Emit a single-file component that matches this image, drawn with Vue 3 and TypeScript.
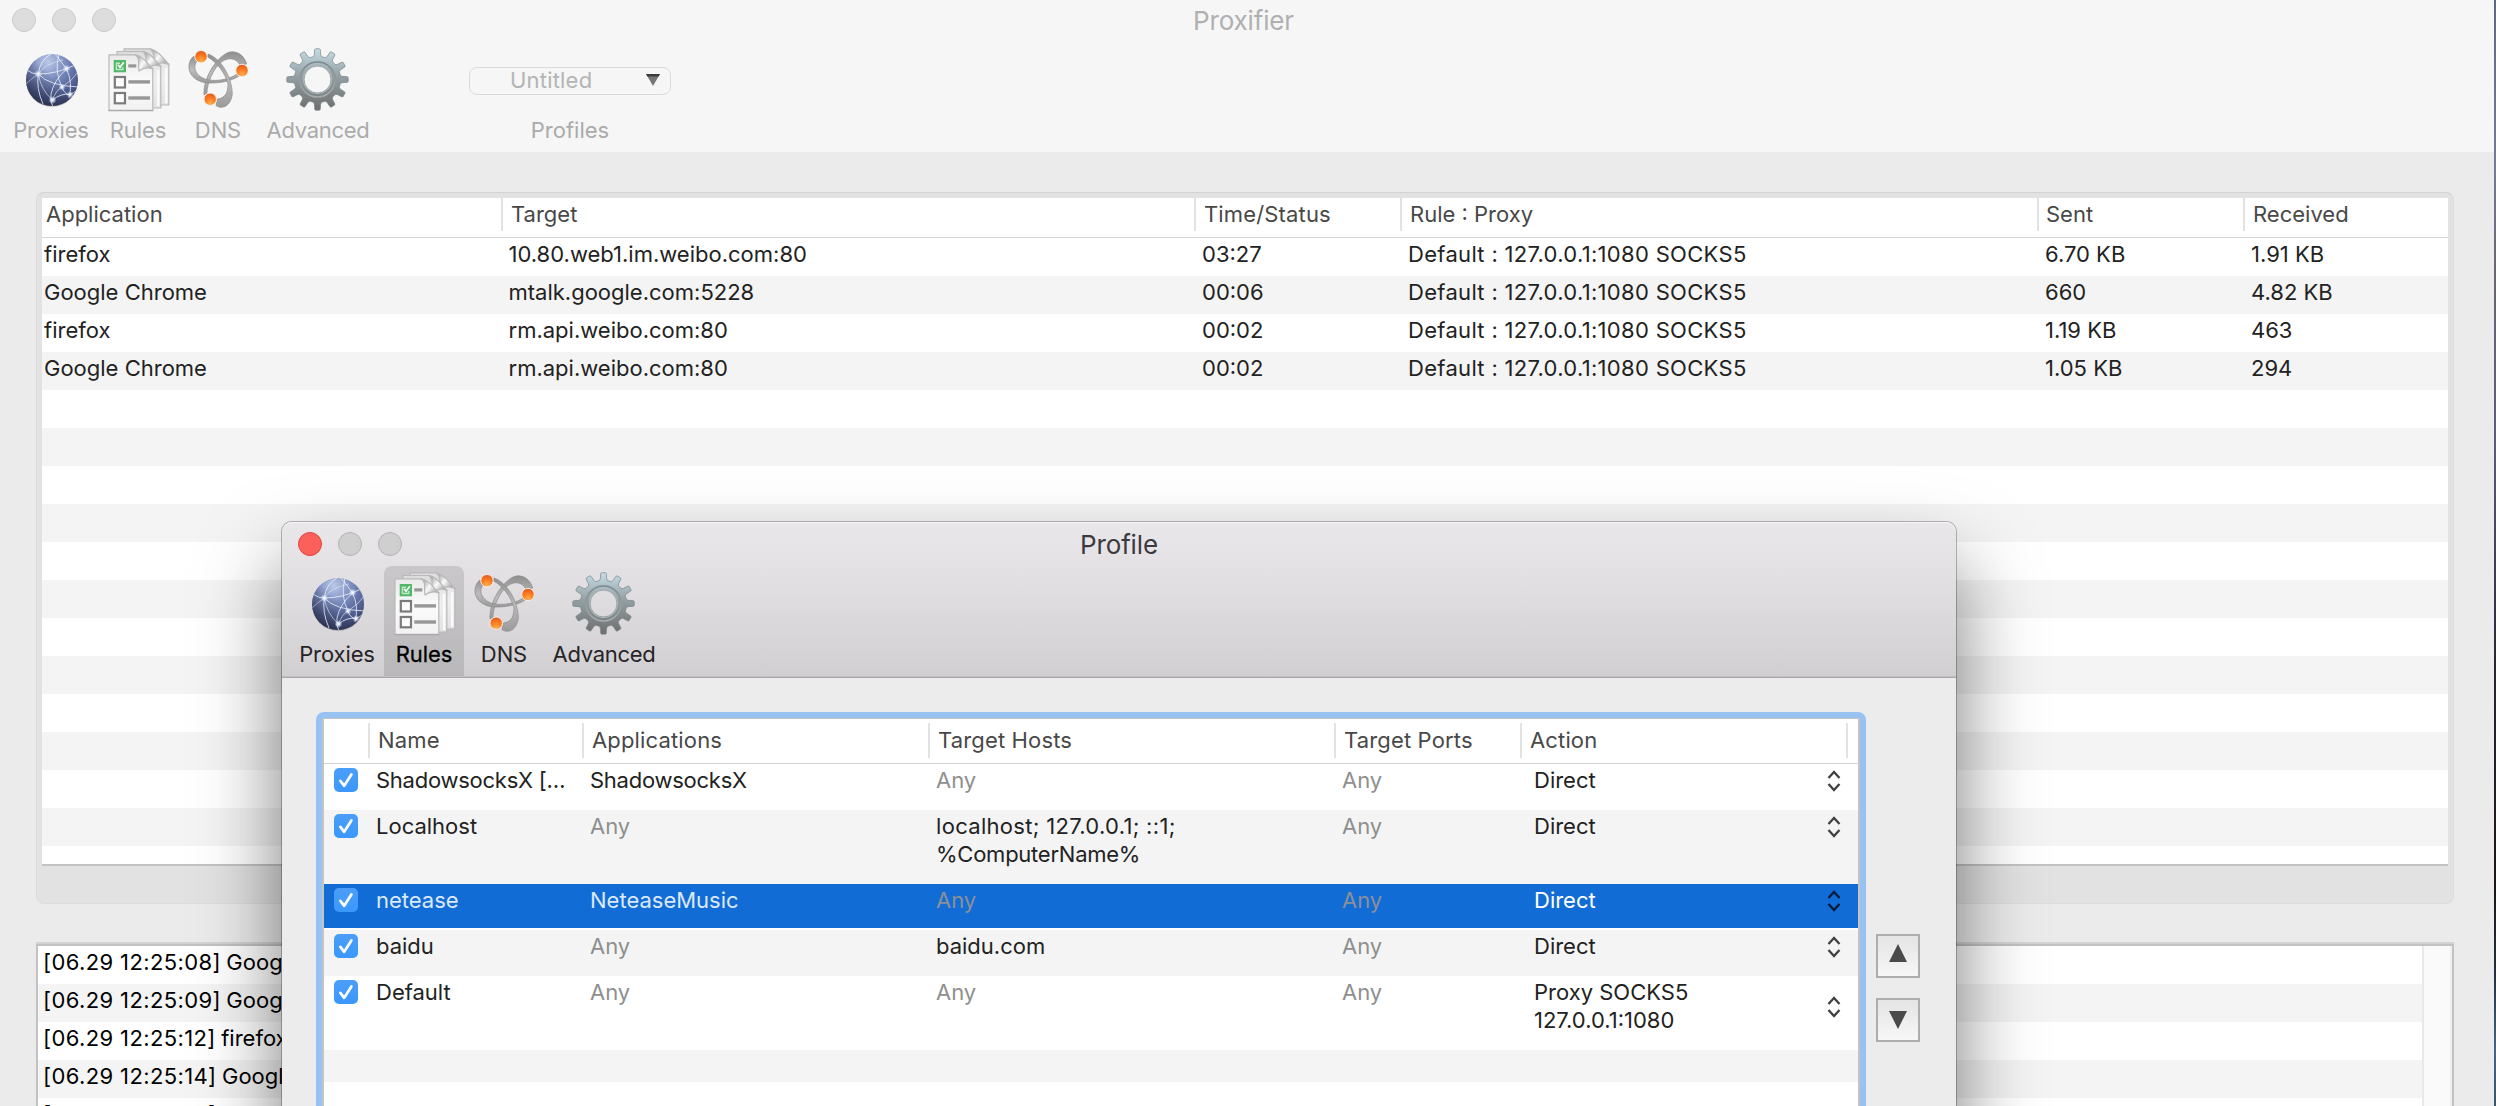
<script setup lang="ts">
interface Tool { label: string; icon: string; width: number; on?: boolean }
interface Connection { app: string; target: string; time: string; rule: string; sent: string; received: string }
interface LogLine { stamp: string; message: string }
interface Rule { name: string; apps: string; hosts: string[]; ports: string; action: string[]; height: number; selected?: boolean }

const tools: Tool[] = [
  { label: 'Proxies', icon: 'globe', width: 94 },
  { label: 'Rules', icon: 'rules', width: 80, on: true },
  { label: 'DNS', icon: 'dns', width: 80 },
  { label: 'Advanced', icon: 'gear', width: 120 },
]

const route = 'Default : 127.0.0.1:1080 SOCKS5'
const connections: Connection[] = [
  { app: 'firefox', target: '10.80.web1.im.weibo.com:80', time: '03:27', rule: route, sent: '6.70 KB', received: '1.91 KB' },
  { app: 'Google Chrome', target: 'mtalk.google.com:5228', time: '00:06', rule: route, sent: '660', received: '4.82 KB' },
  { app: 'firefox', target: 'rm.api.weibo.com:80', time: '00:02', rule: route, sent: '1.19 KB', received: '463' },
  { app: 'Google Chrome', target: 'rm.api.weibo.com:80', time: '00:02', rule: route, sent: '1.05 KB', received: '294' },
]

const log: LogLine[] = [
  { stamp: '[06.29 12:25:08]', message: 'Goog' },
  { stamp: '[06.29 12:25:09]', message: 'Goog' },
  { stamp: '[06.29 12:25:12]', message: 'firefox' },
  { stamp: '[06.29 12:25:14]', message: 'Googl' },
  { stamp: '[06.29 12:25:14]', message: 'Googl' },
]

const rules: Rule[] = [
  { name: 'ShadowsocksX […', apps: 'ShadowsocksX', hosts: ['Any'], ports: 'Any', action: ['Direct'], height: 46 },
  { name: 'Localhost', apps: 'Any', hosts: ['localhost; 127.0.0.1; ::1;', '%ComputerName%'], ports: 'Any', action: ['Direct'], height: 74 },
  { name: 'netease', apps: 'NeteaseMusic', hosts: ['Any'], ports: 'Any', action: ['Direct'], height: 46, selected: true },
  { name: 'baidu', apps: 'Any', hosts: ['baidu.com'], ports: 'Any', action: ['Direct'], height: 46 },
  { name: 'Default', apps: 'Any', hosts: ['Any'], ports: 'Any', action: ['Proxy SOCKS5', '127.0.0.1:1080'], height: 74 },
]

function tracking(text: string): string {
  if (text.includes('127.')) return 'loose'
  if (text.startsWith('Shadow') || text.startsWith('%')) return 'tight'
  return ''
}

// Outline of the twelve-toothed gear: each tooth tapers from root to tip.
function gearOutline(cx: number, cy: number): string {
  const pts: string[] = []
  const at = (r: number, deg: number) => {
    const a = ((deg - 90) * Math.PI) / 180
    pts.push(`${(cx + r * Math.cos(a)).toFixed(2)} ${(cy + r * Math.sin(a)).toFixed(2)}`)
  }
  for (let i = 0; i < 12; i++) {
    const m = i * 30
    at(23.2, m - 10)
    at(25, m - 7.2)
    at(30, m - 5.4)
    at(30.8, m - 3.8)
    at(30.8, m + 3.8)
    at(30, m + 5.4)
    at(25, m + 7.2)
    at(23.2, m + 10)
  }
  return `M${pts.join('L')}Z`
}
const gearPath = gearOutline(31.5, 31.5) + 'M45 31.5a13.5 13.5 0 1 0-27 0a13.5 13.5 0 1 0 27 0Z'
</script>

<template>
  <div class="desktop">
    <svg class="sprites" width="0" height="0" aria-hidden="true">
      <defs>
        <radialGradient id="g-globe" cx="0.42" cy="0.15" r="0.9">
          <stop offset="0" stop-color="#b9c8e8" />
          <stop offset="0.4" stop-color="#7889bb" />
          <stop offset="0.75" stop-color="#4d5b8c" />
          <stop offset="1" stop-color="#2f3654" />
        </radialGradient>
        <linearGradient id="g-shade" x1="0.1" y1="1" x2="0.7" y2="0.4">
          <stop offset="0" stop-color="#1a1c2c" stop-opacity="0.7" />
          <stop offset="0.8" stop-color="#2a3050" stop-opacity="0" />
        </linearGradient>
        <radialGradient id="g-node">
          <stop offset="0" stop-color="#fff" />
          <stop offset="0.35" stop-color="#e8f0ff" stop-opacity="0.85" />
          <stop offset="1" stop-color="#cfe0ff" stop-opacity="0" />
        </radialGradient>
        <linearGradient id="g-page" x1="0" y1="0" x2="0" y2="1">
          <stop offset="0" stop-color="#e9e9e9" />
          <stop offset="0.5" stop-color="#fbfbfb" />
          <stop offset="1" stop-color="#f2f2f2" />
        </linearGradient>
        <linearGradient id="g-back" x1="0" y1="0" x2="0" y2="1">
          <stop offset="0" stop-color="#dcdcdc" />
          <stop offset="0.5" stop-color="#efefef" />
          <stop offset="1" stop-color="#e2e2e2" />
        </linearGradient>
        <linearGradient id="g-curl" x1="0" y1="0.2" x2="1" y2="0.9">
          <stop offset="0" stop-color="#9d9d9d" />
          <stop offset="0.45" stop-color="#fafafa" />
          <stop offset="1" stop-color="#8e8e8e" />
        </linearGradient>
        <linearGradient id="g-metal" x1="0" y1="0" x2="0" y2="1">
          <stop offset="0" stop-color="#8f8f8f" />
          <stop offset="0.5" stop-color="#bcbcbc" />
          <stop offset="1" stop-color="#9a9a9a" />
        </linearGradient>
        <radialGradient id="g-ball" cx="0.5" cy="0.85" r="0.85">
          <stop offset="0" stop-color="#ffae4c" />
          <stop offset="0.5" stop-color="#fb7d22" />
          <stop offset="1" stop-color="#e4571a" />
        </radialGradient>
        <linearGradient id="g-gear" x1="0" y1="0" x2="0" y2="1">
          <stop offset="0" stop-color="#c5dde4" />
          <stop offset="0.45" stop-color="#939fa3" />
          <stop offset="1" stop-color="#6d6e6e" />
        </linearGradient>
        <linearGradient id="g-ring" x1="0" y1="0" x2="0" y2="1">
          <stop offset="0" stop-color="#7b898e" />
          <stop offset="1" stop-color="#a7abab" />
        </linearGradient>
        <clipPath id="c-globe"><circle cx="33" cy="32" r="26" /></clipPath>
      </defs>

      <symbol id="globe" viewBox="0 0 64 64">
        <ellipse cx="33" cy="33.5" rx="25.8" ry="25.5" fill="#000" opacity="0.2" />
        <circle cx="33" cy="32" r="26" fill="url(#g-globe)" />
        <circle cx="33" cy="32" r="26" fill="url(#g-shade)" />
        <g clip-path="url(#c-globe)" fill="none" stroke="#eef3ff" stroke-width="1" stroke-opacity="0.8">
          <path d="M8 22Q13 26 19.3 26Q38 26 56 17" />
          <path d="M32 6Q21 12 19.3 26Q17 40 24 56" />
          <path d="M19.3 26Q30 38 60 39" />
          <path d="M36 6Q41 12 47.5 21Q54 34 50 50" />
          <path d="M47.5 21Q35 32 32 46Q31 54 34 59" />
          <path d="M40 6Q35 24 43 39Q45 46 51 47" />
          <path d="M7 36Q12 31 19.3 26Q25 16 44 12" stroke-opacity="0.5" />
          <path d="M19.3 26Q22 42 33.5 52Q37 42 43 39Q54 32 59 24" stroke-opacity="0.6" />
          <path d="M33.5 52Q42 45 51 46.5Q55 45 58 42" />
        </g>
        <circle cx="19.3" cy="26" r="4" fill="url(#g-node)" />
        <circle cx="47.5" cy="20.5" r="4" fill="url(#g-node)" />
        <circle cx="33.5" cy="52" r="4" fill="url(#g-node)" />
        <circle cx="43" cy="39" r="3.5" fill="url(#g-node)" />
        <circle cx="51" cy="46.5" r="3.5" fill="url(#g-node)" />
      </symbol>

      <symbol id="rules" viewBox="0 0 64 64">
        <g stroke="#b9b9b9" stroke-width="1.2" stroke-linejoin="round">
          <path d="M18 .8H44C52 3 54 11 62.8 16V57H18Z" fill="url(#g-back)" />
          <path d="M44 .8C50 5 47 12 49 17Q56 13 62.8 16.5C57 10 53 3 44 .8Z" fill="url(#g-curl)" />
          <path d="M11 3.5H37C45 5 46 13 54.8 18V60H11Z" fill="url(#g-back)" />
          <path d="M37 3.5C42 8 39 14 41 20Q48 15 54.8 18.5C49 12 45 5 37 3.5Z" fill="url(#g-curl)" />
          <path d="M3 6.8H29C37 8 38 16 46.8 20.5V62.4H3Z" fill="url(#g-page)" />
          <path d="M29 6.8C35 11 31.5 16 33 23Q40 18 46.8 21C41 15 37 8 29 6.8Z" fill="url(#g-curl)" />
        </g>
        <path d="M52.2 22V58M60.2 20V55" fill="none" stroke="#fafafa" stroke-width="2.4" />
        <path d="M2.4 62.6H47.4" stroke="#a9a9a9" stroke-width="1.4" />
        <rect x="7.7" y="12" width="12.3" height="12.3" fill="#54b768" />
        <path d="M10.4 22V15.2H14M10.4 21.5H16.8V19" fill="none" stroke="#bfe8c8" stroke-width="1.4" />
        <path d="M12 16.8L14 19.3L17.8 14.3" fill="none" stroke="#f2fff4" stroke-width="1.8" />
        <g fill="#fdfdfd" stroke="#7b7b7b" stroke-width="2.2">
          <rect x="8.8" y="29" width="10.2" height="10.5" />
          <rect x="8.8" y="45" width="10.2" height="10.3" />
        </g>
        <g fill="#979797">
          <rect x="22.3" y="16.3" width="8" height="3.2" />
          <rect x="22.3" y="32.2" width="21.7" height="3.4" />
          <rect x="22.3" y="48.3" width="21.7" height="3.4" />
        </g>
      </symbol>

      <symbol id="dns" viewBox="0 0 64 64">
        <g fill="url(#g-metal)" stroke="#8b8b8b" stroke-width="0.7" stroke-linejoin="round">
          <path d="M60.7 16C58 6 49 2 42 4.6C30 10 17 30 18 47L21 45C21 36 27 20 36 13.5C43 9 50 10 54 17Z" />
          <path d="M8 8C0 14 0 31 19 34.7C32 36 46 33 53 28L52 25.5C44 31 32 34 20 31.5C8 27 7 18 11 13Z" />
          <path d="M30 57.5C36 62 45 58 46.3 46C46 30 36 11 22 6L21.5 9C30 13 40 26 42 36C42 45 39 50 31.5 51Z" />
        </g>
        <g stroke="#f4f4f4" stroke-width="0.9" fill="url(#g-ball)">
          <circle cx="15" cy="8.7" r="6.2" />
          <circle cx="56" cy="22.5" r="6.2" />
          <circle cx="24.2" cy="51.2" r="6.2" />
        </g>
      </symbol>

      <symbol id="gear" viewBox="0 0 64 64">
        <path :d="gearPath" fill="url(#g-gear)" fill-rule="evenodd" stroke="#78858a" stroke-width="0.7" stroke-linejoin="round" />
        <circle cx="31.5" cy="31.5" r="17.5" fill="none" stroke="url(#g-ring)" stroke-width="1.6" />
        <circle cx="31.5" cy="31.5" r="14" fill="none" stroke="#a9b4b7" stroke-width="1.3" />
      </symbol>

      <symbol id="check" viewBox="0 0 24 24">
        <path d="M6.4 12.9L10.2 17.8L17.4 6.5" fill="none" stroke="#fff" stroke-width="2.7" stroke-linecap="round" stroke-linejoin="round" />
      </symbol>

      <symbol id="stepper" viewBox="0 0 14 22">
        <path d="M1.5 8L7 2L12.5 8M1.5 14L7 20L12.5 14" fill="none" stroke="currentColor" stroke-width="2.3" />
      </symbol>
    </svg>

    <main class="window main">
      <header class="chrome">
        <div class="titlebar">
          <div class="lights"><i></i><i></i><i></i></div>
          <h1>Proxifier</h1>
        </div>
        <div class="toolbar">
          <div v-for="t in tools" :key="t.label" class="tool" :style="{ width: t.width + 'px' }">
            <svg class="icon"><use :href="'#' + t.icon" /></svg>
            <span>{{ t.label }}</span>
          </div>
          <div class="profiles">
            <div class="popup">
              <span>Untitled</span>
              <svg width="14" height="12" viewBox="0 0 14 12"><path d="M0 0H14L7 12Z" fill="#777" /><path d="M0 0H14L12.6 2.5H1.4Z" fill="#3c3c3c" /></svg>
            </div>
            <span>Profiles</span>
          </div>
        </div>
      </header>

      <section class="connections">
        <div class="conn-table">
          <div class="conn-grid head">
            <span>Application</span><span>Target</span><span>Time/Status</span><span>Rule : Proxy</span><span>Sent</span><span>Received</span>
          </div>
          <div class="conn-rows">
            <div v-for="(c, i) in connections" :key="i" class="conn-grid row">
              <span>{{ c.app }}</span><span>{{ c.target }}</span><span>{{ c.time }}</span><span class="loose">{{ c.rule }}</span><span>{{ c.sent }}</span><span>{{ c.received }}</span>
            </div>
          </div>
        </div>
      </section>

      <section class="log">
        <div class="log-lines">
          <p v-for="(l, i) in log" :key="i"><span class="stamp">{{ l.stamp }}</span><span>{{ l.message }}</span></p>
        </div>
        <div class="scroller"></div>
      </section>
    </main>

    <div class="wallpaper"></div>

    <div class="window dialog">
      <header class="chrome">
        <div class="titlebar">
          <div class="lights"><i class="close"></i><i></i><i></i></div>
          <h1>Profile</h1>
        </div>
        <div class="toolbar">
          <div v-for="t in tools" :key="t.label" class="tool" :class="{ on: t.on }" :style="{ width: t.width + 'px' }">
            <svg class="icon"><use :href="'#' + t.icon" /></svg>
            <span>{{ t.label }}</span>
          </div>
        </div>
      </header>

      <div class="dialog-body">
        <div class="focus">
          <div class="rule-table">
            <div class="rule-grid rule-head">
              <span></span><span>Name</span><span>Applications</span><span>Target Hosts</span><span>Target Ports</span><span>Action</span>
            </div>
            <div
              v-for="r in rules"
              :key="r.name"
              class="rule-grid rule-row"
              :class="{ selected: r.selected }"
              :style="{ height: r.height + 'px' }"
            >
              <span class="box"><svg width="24" height="24"><use href="#check" /></svg></span>
              <span :class="tracking(r.name)">{{ r.name }}</span>
              <span :class="[{ any: r.apps === 'Any' }, tracking(r.apps)]">{{ r.apps }}</span>
              <span :class="{ any: r.hosts[0] === 'Any' }"><b v-for="h in r.hosts" :key="h" :class="tracking(h)">{{ h }}</b></span>
              <span :class="{ any: r.ports === 'Any' }">{{ r.ports }}</span>
              <span class="action" :class="{ double: r.action.length > 1 }">
                <span><b v-for="a in r.action" :key="a">{{ a }}</b></span>
                <svg width="14" height="22"><use href="#stepper" /></svg>
              </span>
            </div>
            <div class="rule-row spare"></div>
          </div>
        </div>
        <div class="movers">
          <button><svg width="18" height="18" viewBox="0 0 18 18"><path d="M9 0L18 18H0Z" /></svg></button>
          <button class="down"><svg width="18" height="18" viewBox="0 0 18 18"><path d="M0 0H18L9 18Z" /></svg></button>
        </div>
      </div>
    </div>
  </div>
</template>

<style>
body {
  margin: 0;
  overflow: hidden;
}
</style>

<style scoped>
.desktop {
  position: relative;
  width: 2496px;
  height: 1106px;
  overflow: hidden;
  background: #ebebeb;
  color: #222;
  font: 400 22px/32px Inter, "Liberation Sans", sans-serif;
  white-space: nowrap;
}
.sprites {
  position: absolute;
}
.window {
  box-sizing: border-box;
}
.main {
  width: 2498px;
  height: 1108px;
  margin: -2px 0 0 -4px;
  background: #ebebeb;
}
.wallpaper {
  position: absolute;
  top: 0;
  right: 0;
  width: 2px;
  height: 1106px;
  background: linear-gradient(#5c6a80 0, #727d94 15%, #6e6474 24%, #5a5d78 40%, #2c2436 60%, #1d1418 80%, #22303e 88%, #456587 95%, #38536f);
}
.chrome {
  height: 154px;
  background: #f6f6f6;
}
.titlebar {
  display: grid;
  grid-template-columns: 200px 1fr 200px;
  height: 44px;
}
.lights {
  display: flex;
  gap: 16px;
  padding: 10px 0 0 16px;
}
.lights i {
  box-sizing: border-box;
  width: 24px;
  height: 24px;
  border: 1px solid #cbcbcb;
  border-radius: 50%;
  background: #dddddd;
}
h1 {
  margin: 0;
  color: #b0b0b0;
  font-size: 26px;
  font-weight: 400;
  line-height: 45px;
  text-align: center;
  letter-spacing: -0.15px;
}
.main h1 {
  padding-right: 3px;
}
.toolbar {
  display: flex;
  height: 110px;
  padding-left: 8px;
}
.tool {
  display: flex;
  flex-direction: column;
  align-items: center;
  color: #ababab;
  line-height: 28px;
  letter-spacing: -0.1px;
}
.tool:last-of-type,
.tool:nth-child(4) {
  letter-spacing: -0.3px;
}
.icon {
  width: 64px;
  height: 64px;
  margin: 6px 0 4px;
}
.profiles {
  display: flex;
  flex-direction: column;
  align-items: center;
  width: 202px;
  margin: 25px 0 0 91px;
  color: #ababab;
  line-height: 28px;
}
.popup {
  display: flex;
  justify-content: space-between;
  box-sizing: border-box;
  width: 202px;
  height: 28px;
  margin-bottom: 21px;
  padding: 0 10px 0 40px;
  border: 1px solid #dadada;
  border-radius: 8px;
  color: #b4b4b4;
  line-height: 25px;
  letter-spacing: 0.2px;
}
.popup svg {
  margin-top: 6px;
}

.connections {
  box-sizing: border-box;
  width: 2418px;
  height: 712px;
  margin: 40px 0 38px 40px;
  padding: 5px;
  border: 1px solid #dcdcdc;
  border-top-color: #d3d3d3;
  border-radius: 8px;
  background: #e2e2e2;
}
.conn-table {
  height: 666px;
  border-bottom: 2px solid #c3c3c3;
  background: #fff;
}
.conn-grid {
  display: grid;
  grid-template-columns: 461px 693px 206px 637px 206px 203px;
}
.head {
  box-sizing: border-box;
  height: 40px;
  border-bottom: 1px solid #d4d4d4;
  color: #484848;
}
.head span {
  box-sizing: border-box;
  height: 33px;
  padding-left: 8px;
  border-right: 2px solid #e2e2e2;
}
.head span:first-child {
  padding-left: 4px;
}
.head span:nth-child(3) {
  letter-spacing: 0.15px;
}
.head span:nth-child(5) {
  padding-left: 7px;
}
.head span:last-child {
  border: 0;
}
.conn-rows {
  height: 626px;
  background: repeating-linear-gradient(#fff 0 38px, #f4f4f4 38px 76px);
}
.row {
  height: 38px;
}
.row span {
  padding-left: 6px;
}
.row span:first-child {
  padding-left: 2px;
}
.row span:nth-child(2) {
  padding-left: 5.5px;
}
.loose {
  letter-spacing: 0.31px;
}
.tight {
  letter-spacing: -0.25px;
}

.log {
  display: flex;
  box-sizing: border-box;
  width: 2418px;
  height: 162px;
  margin-top: 40px;
  margin-left: 40px;
  overflow: hidden;
  border: solid #c2c2c2;
  border-width: 2px 2px 0;
  box-shadow: 0 -2px 0 #d3d3d3;
}
.log-lines {
  flex: 1;
  color: #000;
  background: repeating-linear-gradient(#fff 0 38px, #f4f4f4 38px 76px);
}
.log p {
  display: flex;
  gap: 5.5px;
  height: 38px;
  margin: 0;
  padding-left: 5px;
}
.stamp {
  letter-spacing: 0.38px;
}
.scroller {
  box-sizing: border-box;
  width: 30px;
  border: solid #e8e8e8;
  border-width: 0 2px;
  border-right-color: #efefef;
  background: #fafafa;
}

.dialog {
  position: absolute;
  top: 522px;
  left: 282px;
  width: 1674px;
  height: 860px;
  border-radius: 10px;
  background: #ececec;
  box-shadow: 0 0 0 1px rgba(0, 0, 0, 0.26), 0 46px 82px rgba(0, 0, 0, 0.53);
}
.dialog .chrome {
  box-sizing: border-box;
  height: 156px;
  border-bottom: 1px solid #a9a9a9;
  border-radius: 10px 10px 0 0;
  background: linear-gradient(#e9e7e9, #e2e0e3 35%, #d1cfd1);
  box-shadow: inset 0 1px 0 #f6f6f6, inset 0 -1px 0 #c0bfc0;
}
.dialog h1 {
  color: #3c3a3e;
}
.dialog .lights i {
  border-color: #b3b3b3;
  background: #cfcfcf;
}
.dialog .lights .close {
  border-color: #e2443f;
  background: #fc605b;
}
.dialog .tool {
  color: #252426;
}
.dialog .tool.on {
  border-radius: 8px 8px 0 0;
  background: rgba(0, 0, 0, 0.115);
  color: #000;
  -webkit-text-stroke: 0.3px #000;
}
.dialog-body {
  display: flex;
  padding: 34px 0 0 34px;
}
.focus {
  box-sizing: border-box;
  width: 1550px;
  height: 700px;
  padding: 6px;
  border-radius: 8px;
  background: #98c2f1;
}
.rule-table {
  border: solid #c4c4c4;
  border-width: 1px 2px;
  background: #fff;
}
.rule-grid {
  display: grid;
  grid-template-columns: 46px 214px 346px 406px 186px 326px;
}
.rule-head {
  box-sizing: border-box;
  height: 45px;
  padding-top: 4px;
  border-bottom: 1px solid #d4d4d4;
  color: #484848;
  line-height: 34px;
}
.rule-head span {
  box-sizing: border-box;
  height: 35px;
  padding-left: 8px;
  border-right: 2px solid #e2e2e2;
  letter-spacing: 0.15px;
}
.rule-row {
  box-sizing: border-box;
  line-height: 28px;
}
.rule-row > span {
  padding: 2px 0 0 6px;
}
.rule-row b {
  display: block;
  font-weight: 400;
}
.rule-row > .box {
  width: 24px;
  height: 24px;
  margin: 4px 0 0 10px;
  padding: 0;
  border-radius: 5px;
  background: linear-gradient(#4b9ef8, #3b97fb);
  line-height: 0;
}
.rule-row .any {
  color: #8f8f8f;
}
.rule-row > .action {
  display: flex;
  justify-content: space-between;
  padding: 2px 7px 0 12px;
  color: #222;
}
.action svg {
  margin-top: 4px;
  color: #404040;
}
.action.double svg {
  margin-top: 18px;
}
.rule-row:nth-child(odd) {
  background: #f4f4f4;
}
.rule-row.selected {
  border-bottom: 2px solid #fff;
  background: #116cd6;
  color: #dce9f9;
}
.selected .any {
  color: #8b8f99;
}
.selected > .action {
  color: #fff;
}
.selected .action svg {
  color: #071b3a;
}
.rule-row.spare {
  height: 32px;
  margin-bottom: 200px;
}
.movers {
  display: flex;
  flex-direction: column;
  gap: 20px;
  margin: 222px 0 0 10px;
}
.movers button {
  display: flex;
  justify-content: center;
  box-sizing: border-box;
  width: 44px;
  height: 44px;
  padding: 7.5px 0 0;
  border: 2px solid #adadad;
  background: linear-gradient(#e4e4e4, #f7f7f7);
}
.movers .down {
  padding-top: 11px;
}
.movers path {
  fill: #4a4a4a;
}
</style>
